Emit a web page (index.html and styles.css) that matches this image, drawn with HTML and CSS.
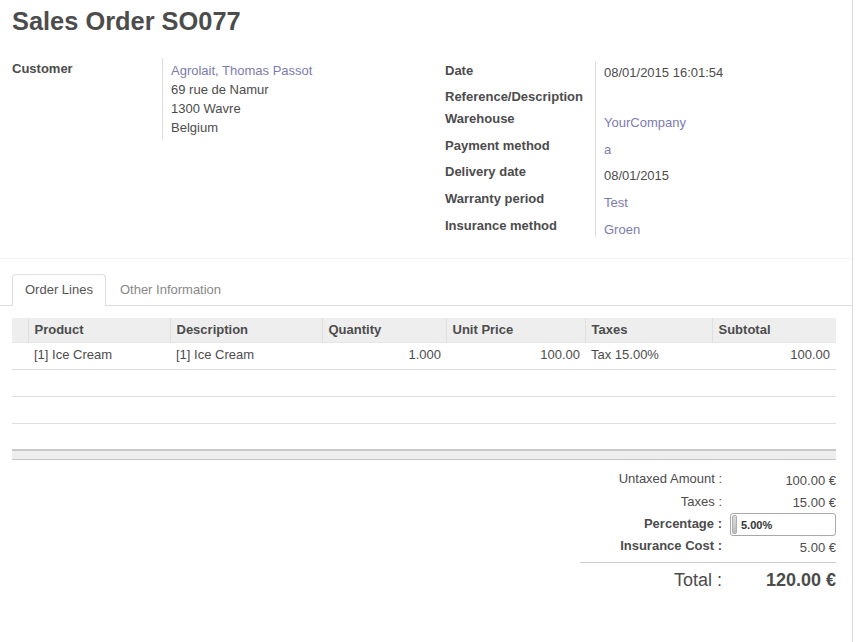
FILE: index.html
```html
<!DOCTYPE html>
<html>
<head>
<meta charset="utf-8">
<link rel="stylesheet" href="styles.css">
</head>
<body>
<div class="sheet">
  <h1 class="title">Sales Order SO077</h1>

  <div class="groups">
    <div class="group group-left">
      <div class="label">Customer</div>
      <div class="values">
        <div class="line link">Agrolait, Thomas Passot</div>
        <div class="line">69 rue de Namur</div>
        <div class="line">1300 Wavre</div>
        <div class="line">Belgium</div>
      </div>
    </div>
    <div class="group group-right">
      <div class="row r1"><div class="label">Date</div><div class="value">08/01/2015 16:01:54</div></div>
      <div class="row r2"><div class="label">Reference/Description</div><div class="value"></div></div>
      <div class="row r3"><div class="label">Warehouse</div><div class="value link">YourCompany</div></div>
      <div class="row r4"><div class="label">Payment method</div><div class="value link">a</div></div>
      <div class="row r5"><div class="label">Delivery date</div><div class="value">08/01/2015</div></div>
      <div class="row r6"><div class="label">Warranty period</div><div class="value link">Test</div></div>
      <div class="row r7"><div class="label">Insurance method</div><div class="value link">Groen</div></div>
    </div>
  </div>

  <div class="tabs">
    <div class="tab active">Order Lines</div>
    <div class="tab">Other Information</div>
  </div>

  <table class="lines">
    <colgroup>
      <col class="c-handle"><col class="c-product"><col class="c-desc"><col class="c-qty"><col class="c-price"><col class="c-tax"><col class="c-sub">
    </colgroup>
    <thead>
      <tr>
        <th class="handle"></th>
        <th>Product</th>
        <th>Description</th>
        <th>Quantity</th>
        <th>Unit Price</th>
        <th>Taxes</th>
        <th>Subtotal</th>
      </tr>
    </thead>
    <tbody>
      <tr>
        <td></td>
        <td>[1] Ice Cream</td>
        <td>[1] Ice Cream</td>
        <td class="num">1.000</td>
        <td class="num">100.00</td>
        <td>Tax 15.00%</td>
        <td class="num">100.00</td>
      </tr>
      <tr class="empty"><td></td><td></td><td></td><td></td><td></td><td></td><td></td></tr>
      <tr class="empty"><td></td><td></td><td></td><td></td><td></td><td></td><td></td></tr>
      <tr class="empty last"><td></td><td></td><td></td><td></td><td></td><td></td><td></td></tr>
    </tbody>
    <tfoot>
      <tr><td colspan="7"></td></tr>
    </tfoot>
  </table>

  <div class="totals">
    <div class="t-label">Untaxed Amount :</div><div class="t-value">100.00 €</div>
    <div class="t-label">Taxes :</div><div class="t-value">15.00 €</div>
    <div class="t-label bold">Percentage :</div>
    <div class="t-value"><div class="progress"><div class="bar" style="width:5%"></div><span class="ptext">5.00%</span></div></div>
    <div class="t-label bold">Insurance Cost :</div><div class="t-value">5.00 €</div>
    <div class="t-total-label">Total :</div><div class="t-total-value">120.00 €</div>
  </div>
</div>
</body>
</html>
```

FILE: styles.css
```css
* { box-sizing: border-box; }

html, body {
  margin: 0;
  padding: 0;
  background: #fff;
}

body {
  font-family: "Liberation Sans", Arial, sans-serif;
  font-size: 13px;
  line-height: 18.5px;
  color: #4c4c4c;
}

.sheet {
  width: 853px;
  min-height: 642px;
  border-right: 1px solid #d6d6d6;
  padding-bottom: 20px;
}

.title {
  margin: 0;
  padding: 5px 0 0 12px;
  font-size: 25.4px;
  line-height: 32px;
  font-weight: bold;
  color: #4c4c4c;
}

.link { color: #7c7bad; }

.groups {
  display: flex;
  padding: 21px 0 0 12px;
  height: 222px;
  border-bottom: 1px solid #f4f4f4;
}

.group {
  flex-shrink: 0;
}

.group-left {
  width: 433px;
  display: flex;
  align-items: flex-start;
}

.group-left .label {
  width: 150px;
  font-weight: bold;
  padding-top: 2px;
}

.group-left .values {
  border-left: 1px solid #ddd;
  padding: 3px 0 3px 8px;
}

.group-left .line {
  line-height: 19px;
}

.group-right {
  display: flex;
  flex-direction: column;
  padding-top: 4px;
}

.row {
  display: flex;
}

.row .label {
  width: 150px;
  font-weight: bold;
}

.row .value {
  border-left: 1px solid #ddd;
  padding: 4px 0 0 8px;
}

.r1 { height: 26px; }
.r1 .value { padding-top: 2px; }
.r2 { height: 22px; }
.r3 { height: 27px; }
.r4 { height: 26px; }
.r5 { height: 27px; }
.r6 { height: 27px; }
.r7 { height: 20px; }
.r7 .value { height: 20px; }

.tabs {
  display: flex;
  padding: 15px 0 0 12px;
  border-bottom: 1px solid #ddd;
}

.tab {
  padding: 6px 12px 6px 12px;
  line-height: 18px;
  color: #888;
  margin-right: 1px;
  border: 1px solid transparent;
  border-bottom: 0;
  border-radius: 4px 4px 0 0;
  margin-bottom: -1px;
}

.tab.active {
  color: #555;
  background: #fff;
  border-color: #ddd;
  height: 32px;
  padding-top: 6px;
}

.lines {
  margin: 12px 0 0 12px;
  width: 824px;
  border-collapse: collapse;
  table-layout: fixed;
}

.c-handle { width: 16px; }
.c-product { width: 142px; }
.c-desc { width: 152px; }
.c-qty { width: 124px; }
.c-price { width: 139px; }
.c-tax { width: 127px; }
.c-sub { width: 124px; }

.lines th {
  background: #eee;
  text-align: left;
  font-weight: bold;
  height: 24px;
  padding: 0 6px;
  border-left: 1px solid #e0e0e0;
  border-bottom: 1px solid #e6e6e6;
  color: #4c4c4c;
}

.lines th.handle { border-left: 0; }

.lines td {
  height: 27px;
  padding: 0 6px;
  border-bottom: 1px solid #ddd;
  white-space: nowrap;
}

.lines td.num { text-align: right; padding-right: 5px; }
.lines td:last-child.num { padding-right: 6px; }

.lines tr.last td { border-bottom: 0; }

.lines tfoot td {
  height: 9px;
  padding: 0;
  background: #eee;
  border-top: 2px solid #c8c8c8;
  border-bottom: 1px solid #c4c4c4;
}

.totals {
  display: grid;
  grid-template-columns: 150px 106px;
  grid-auto-rows: 22.3px;
  margin: 9px 0 0 580px;
  width: 258px;
  align-items: center;
}

.t-label {
  text-align: right;
  padding-right: 8px;
}

.t-label.bold { font-weight: bold; }

.t-value {
  text-align: right;
  padding-top: 3px;
}

.progress {
  position: relative;
  height: 23px;
  border: 1px solid #a8a8a8;
  border-radius: 3px;
  text-align: left;
  margin-top: -3px;
  background: #fff;
}

.progress .bar {
  position: absolute;
  left: 1px;
  top: 1px;
  bottom: 1px;
  background: linear-gradient(#dcdcdc, #bdbdbd);
  border: 1px solid #b0b0b0;
  border-radius: 2px;
}

.progress .ptext {
  position: absolute;
  left: 10px;
  top: 2px;
  font-size: 11px;
  font-weight: bold;
  color: #333;
}

.t-total-label,
.t-total-value {
  border-top: 1px solid #ccc;
  margin-top: 20px;
  height: 34px;
  font-size: 18px;
  line-height: 34px;
}

.t-total-label {
  text-align: right;
  padding-right: 8px;
}

.t-total-value {
  text-align: right;
  font-weight: bold;
}
```
